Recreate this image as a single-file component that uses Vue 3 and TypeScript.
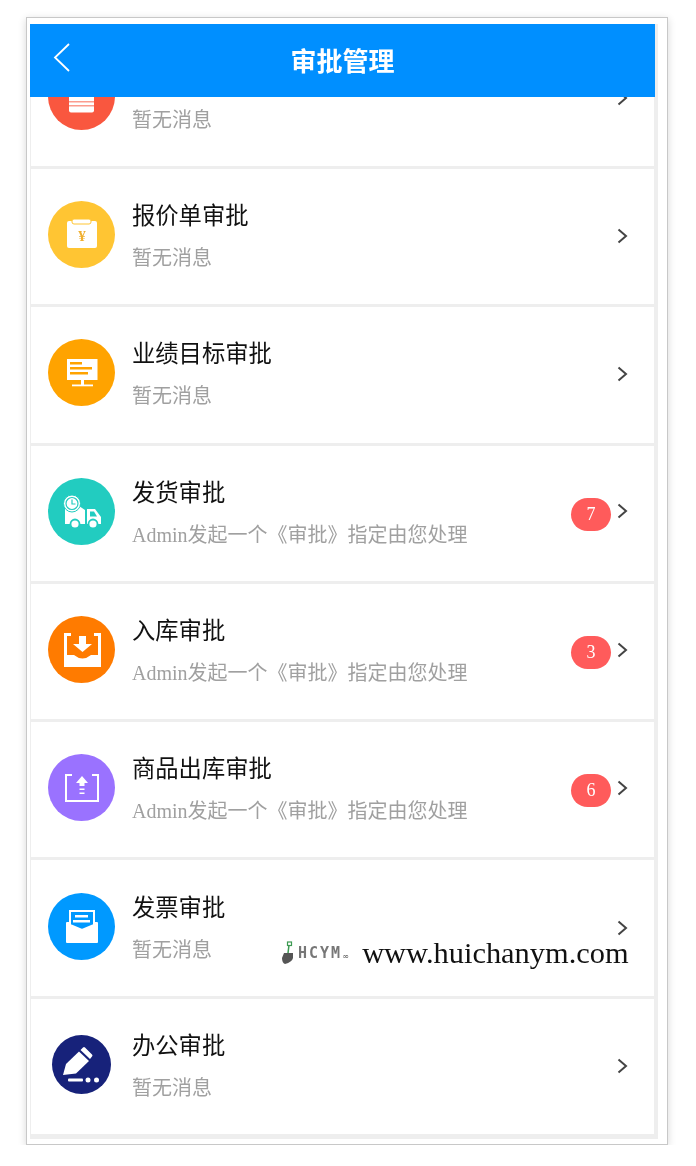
<template>
  <div class="frame">
    <div class="screen">
      <header class="nav">
        <button class="back" aria-label="back">
          <svg width="20" height="30" viewBox="0 0 20 30"><path d="M18 1 L4 14.500 L18 28" fill="none" stroke="#fff" stroke-width="1.800" /></svg>
        </button>
        <h1>审批管理</h1>
        <span></span>
      </header>
      <div class="viewport">
        <ul class="list">
          <li v-for="item in items" :key="item.icon" class="row">
            <svg class="icon" width="67" height="67" viewBox="0 0 67 67">
              <circle cx="33.5" cy="33.5" :r="item.icon === 'pen' ? 29.5 : 33.5" :fill="item.color" />
              <g v-if="item.icon === 'card'">
                <rect x="21" y="20" width="25" height="29.5" rx="2" fill="#fff" />
                <rect x="21" y="38" width="25" height="1.5" fill="#fb9c8e" />
                <rect x="21" y="42" width="25" height="1.5" fill="#fb9c8e" />
              </g>
              <g v-else-if="item.icon === 'quote'">
                <rect x="19" y="20" width="30" height="27" rx="2" fill="#fff" />
                <rect x="24" y="18" width="19" height="5" rx="2" fill="#fff" stroke="#ffc533" stroke-width="1" />
                <text x="34" y="40" text-anchor="middle" class="yen">¥</text>
              </g>
              <g v-else-if="item.icon === 'screen'">
                <rect x="19" y="20" width="30.5" height="21" fill="#fff" />
                <rect x="33" y="41" width="3" height="5" fill="#fff" />
                <rect x="24" y="45.500" width="21" height="1.800" fill="#fff" />
                <rect x="22" y="23" width="12" height="2.500" fill="#ffa300" />
                <rect x="22" y="28" width="22" height="2.500" fill="#ffa300" />
                <rect x="22" y="33" width="18" height="2.500" fill="#ffa300" />
              </g>
              <g v-else-if="item.icon === 'truck'">
                <path d="M17 28 H31 L37 32 V46 H17 Z" fill="#fff" />
                <path d="M39 31 H47 L53 39 V46 H39 Z" fill="#fff" />
                <path d="M42 33.500 H46 L49 38.500 H42 Z" fill="#22ccc0" />
                <circle cx="24" cy="25.500" r="8.500" fill="#fff" stroke="#22ccc0" stroke-width="1" />
                <circle cx="24" cy="25.500" r="6" fill="none" stroke="#22ccc0" stroke-width="1.200" />
                <path d="M24 21.500 V26 H27.500" fill="none" stroke="#22ccc0" stroke-width="1.200" />
                <circle cx="27" cy="46" r="4.500" fill="#fff" stroke="#22ccc0" stroke-width="1.800" />
                <circle cx="45" cy="46" r="4.500" fill="#fff" stroke="#22ccc0" stroke-width="1.800" />
              </g>
              <g v-else-if="item.icon === 'inbox'">
                <path d="M23 18.500 H17.500 V49.500 H51.500 V18.500 H46" fill="none" stroke="#fff" stroke-width="3" />
                <path d="M17 39 H26 Q34.500 46 43 39 H52 V51 H17 Z" fill="#fff" />
                <path d="M31 20 H38 V28 H44 L34.500 36 L25 28 H31 Z" fill="#fff" />
              </g>
              <g v-else-if="item.icon === 'outbox'">
                <path d="M24 21 H18 V47 H50 V21 H44" fill="none" stroke="#fff" stroke-width="2" />
                <path d="M34 22 L40 29 H36.500 V32 H31.500 V29 H28 Z" fill="#fff" />
                <rect x="31.500" y="34.500" width="5" height="1.500" fill="#fff" />
                <rect x="31.500" y="38.500" width="5" height="1.500" fill="#fff" />
              </g>
              <g v-else-if="item.icon === 'mail'">
                <rect x="18" y="29" width="32" height="21" rx="1" fill="#fff" />
                <path d="M22 18 H46 V32 L34 37 L22 32 Z" fill="#0099ff" stroke="#fff" stroke-width="2" />
                <rect x="27" y="22" width="13" height="2.500" fill="#fff" />
                <rect x="25" y="27" width="17" height="2.500" fill="#fff" />
              </g>
              <g v-else>
                <path d="M15 44 L18 33 L31 20.500 L41 30 L28 42.500 Z" fill="#fff" />
                <path d="M32.500 19 L35 16.500 Q36 15.500 37 16.500 L44 23.500 Q45 24.500 44 25.500 L42 28 Z" fill="#fff" />
                <rect x="20" y="47.500" width="15" height="3" rx="1" fill="#fff" />
                <circle cx="40" cy="49" r="2.500" fill="#fff" />
                <circle cx="48.500" cy="49" r="2.500" fill="#fff" />
              </g>
            </svg>
            <div class="text">
              <div class="title">{{ item.title }}</div>
              <div class="sub">{{ item.count ? pending : '暂无消息' }}</div>
            </div>
            <span v-if="item.count" class="badge">{{ item.count }}</span>
            <svg class="arrow" :class="{ raised: item.count }" width="11" height="16" viewBox="0 0 11 16"><path d="M1.500 1.500 L9 8 L1.500 14.500" fill="none" stroke="#444" stroke-width="2" /></svg>
          </li>
        </ul>
      </div>
    </div>
    <div class="mark">
      <svg width="14" height="24" viewBox="0 0 14 24">
        <path d="M7 12 L8 4" stroke="#3c9a52" stroke-width="1.500" fill="none" />
        <rect x="6.500" y="1" width="4" height="3.500" fill="none" stroke="#3c9a52" stroke-width="1.200" />
        <path d="M3 12 H12 V17 Q11 21 4 23 Q1 22 1 17 Z" fill="#555" />
      </svg>
      <span class="mark-name">HCYM</span>
      <span class="mark-dots">∞</span>
      <span class="mark-url">www.huichanym.com</span>
    </div>
  </div>
</template>

<script setup lang="ts">
interface Item {
  title: string
  icon: string
  color: string
  count?: number
}

const pending = 'Admin发起一个《审批》指定由您处理'

// the first row is scrolled under the header, its title is not visible
const items: Item[] = [
  { title: '', icon: 'card', color: '#f9573f' },
  { title: '报价单审批', icon: 'quote', color: '#ffc533' },
  { title: '业绩目标审批', icon: 'screen', color: '#ffa300' },
  { title: '发货审批', icon: 'truck', color: '#22ccc0', count: 7 },
  { title: '入库审批', icon: 'inbox', color: '#ff7b00', count: 3 },
  { title: '商品出库审批', icon: 'outbox', color: '#9a72ff', count: 6 },
  { title: '发票审批', icon: 'mail', color: '#0099ff' },
  { title: '办公审批', icon: 'pen', color: '#17227a' },
]
</script>

<style>
html, body {
  margin: 0;
  background: #fff;
}
</style>

<style scoped>
.frame {
  position: relative;
  box-sizing: border-box;
  width: 642px;
  height: 1128px;
  margin: 17px 0 0 26px;
  padding: 6px 9px 5px 3px;
  background: #fff;
  border: 1px solid #c8c8c8;
  box-shadow: 0 2px 8px rgba(0, 0, 0, 0.16);
  font-family: "Liberation Serif", "Noto Sans CJK SC", serif;
  filter: blur(0.6px);
}
.screen {
  height: 100%;
  background: #eeeeee;
  display: flex;
  flex-direction: column;
}
.nav {
  position: relative;
  z-index: 1;
  flex: none;
  width: 625px;
  height: 73px;
  background: #008fff;
  display: grid;
  grid-template-columns: 1fr auto 1fr;
  align-items: center;
}
.nav h1 {
  margin: -3px 0 0;
  color: #fff;
  font-size: 26px;
  font-weight: 700;
}
.back {
  justify-self: start;
  margin: -6px 0 0 21px;
  padding: 0;
  border: 0;
  background: none;
  display: flex;
}
.viewport {
  flex: 1;
  overflow: hidden;
  padding-left: 1px;
}
.list {
  list-style: none;
  margin: -66.300px 0 0;
  padding: 0;
  width: 623px;
}
.row {
  box-sizing: border-box;
  height: 135.300px;
  margin-bottom: 3px;
  padding: 0 26px 0 17px;
  background: #fff;
  display: flex;
  align-items: center;
}
.icon {
  flex: none;
  margin-top: -4px;
}
.yen {
  fill: #f0b030;
  font-size: 15px;
  font-weight: 700;
}
.text {
  flex: 1;
  min-width: 0;
  margin: 1px 0 0 17px;
}
.title {
  height: 30px;
  color: #111;
  font-size: 23.300px;
  line-height: 30px;
}
.sub {
  margin-top: 12px;
  color: #a0a0a0;
  font-size: 20px;
  line-height: 30px;
  white-space: nowrap;
}
.badge {
  flex: none;
  width: 40px;
  height: 33px;
  margin: 2px 6px 0 0;
  border-radius: 17px;
  background: #ff5b5b;
  color: #fff;
  font-size: 18px;
  line-height: 33px;
  text-align: center;
}
.arrow {
  flex: none;
  margin-top: -1px;
}
.arrow.raised {
  margin-top: -4px;
}
.mark {
  position: absolute;
  left: 254px;
  top: 920px;
  display: flex;
  align-items: center;
  height: 30px;
  color: #111;
}
.mark-name {
  margin-left: 3px;
  color: #777;
  font-family: "DejaVu Sans Mono", monospace;
  font-size: 15px;
  font-weight: 700;
  letter-spacing: 2px;
}
.mark-dots {
  width: 10px;
  margin-top: 6px;
  color: #555;
  font-family: "DejaVu Sans", sans-serif;
  font-size: 8px;
}
.mark-url {
  margin-left: 10px;
  font-size: 30.400px;
  line-height: 30px;
}
</style>
